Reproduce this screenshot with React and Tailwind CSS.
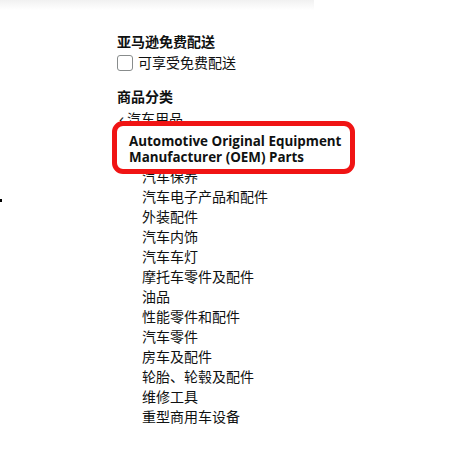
const items = [
  '汽车保养',
  '汽车电子产品和配件',
  '外装配件',
  '汽车内饰',
  '汽车车灯',
  '摩托车零件及配件',
  '油品',
  '性能零件和配件',
  '汽车零件',
  '房车及配件',
  '轮胎、轮毂及配件',
  '维修工具',
  '重型商用车设备',
];

export default function App() {
  return (
    <div
      className="relative w-[458px] h-[473px] bg-white overflow-hidden text-[#0f1111]"
      style={{ fontFamily: '"Open Sans", "Noto Sans CJK SC", sans-serif' }}
    >
      <div className="h-[10px] w-[314px] bg-gradient-to-b from-[#f1f1f1] to-white" />
      <div className="absolute left-0 top-[199px] w-[2px] h-[3px] bg-black" />

      <div className="pl-[117px] pt-[22px]">
        <div className="text-[14px] leading-[20px] font-bold">亚马逊免费配送</div>
        <label className="flex items-center gap-[5px] text-[14px] leading-[20px] h-[20px] mt-[1px]">
          <span className="w-[16px] h-[16px] border border-[#888c8c] rounded-[3px] bg-white shrink-0" />
          <span>可享受免费配送</span>
        </label>

        <div className="mt-[14px] text-[14px] leading-[20px] font-bold">商品分类</div>
        <div className="mt-[2px] text-[14px] leading-[20px] flex items-center gap-[3px]">
          <span className="text-[17px] leading-[20px] pl-[2px]">‹</span>
          <span>汽车用品</span>
        </div>

        <div className="mt-[4px] pl-[12px] text-[13.4px] leading-[16px] font-bold">
          Automotive Original Equipment
          <br />
          Manufacturer (OEM) Parts
        </div>

        <ul className="mt-[2px] pl-[25px] text-[14px] leading-[20px]">
          {items.map((name) => (
            <li key={name}>{name}</li>
          ))}
        </ul>
      </div>

      <div className="absolute left-[112px] top-[121px] w-[243px] h-[53px] border-[5px] border-[#f01414] rounded-[11px]" />
    </div>
  );
}
